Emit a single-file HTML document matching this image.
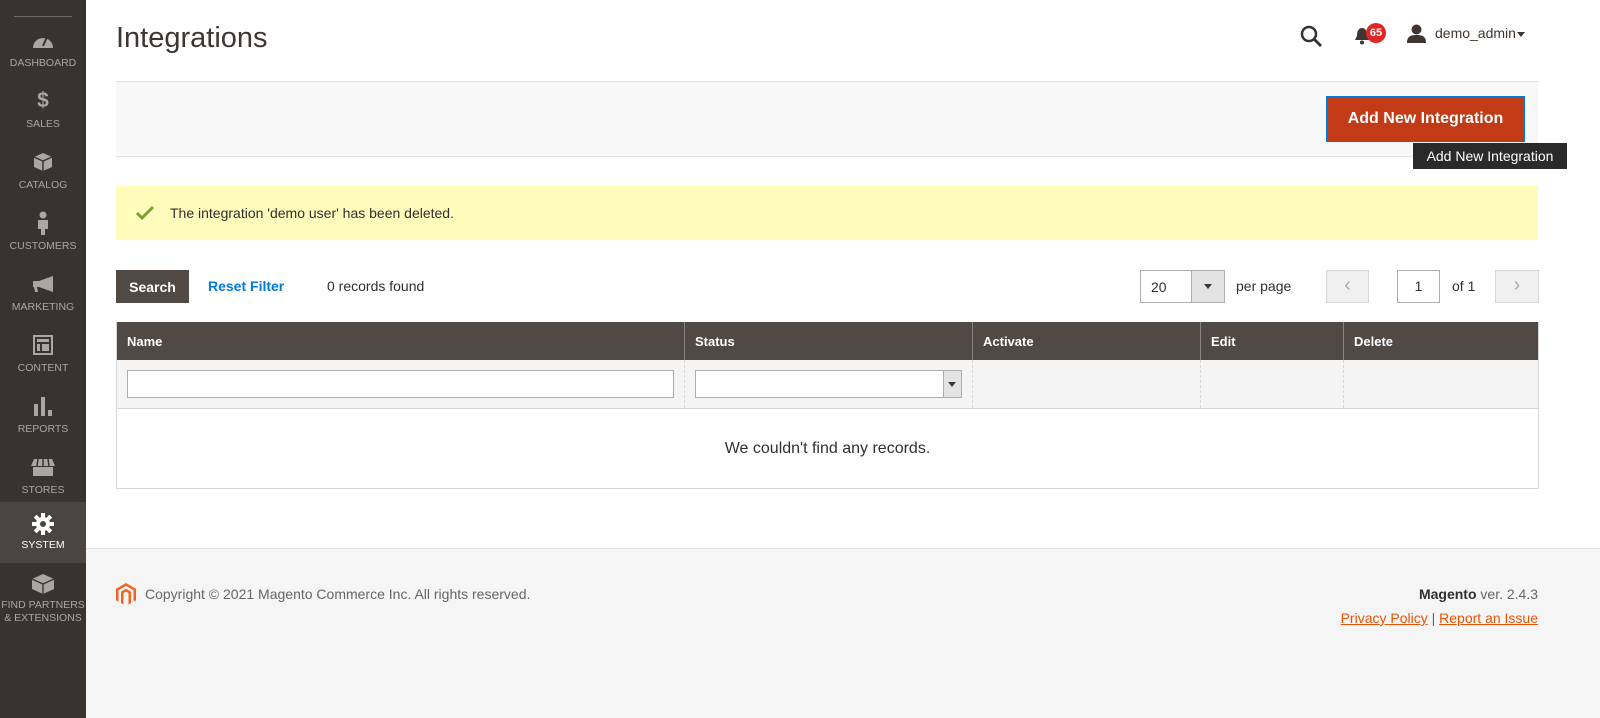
<!DOCTYPE html><html><head><meta charset="utf-8"><style>
*{box-sizing:border-box;margin:0;padding:0}
body{width:1600px;height:718px;overflow:hidden;font-family:"Liberation Sans",sans-serif;color:#303030;background:#fff;position:relative;font-size:14px}
.side{position:absolute;left:0;top:0;width:86px;height:718px;background:#373330}
.side .ln{position:absolute;left:14px;top:16px;width:58px;height:1px;background:#736963}
.it{position:absolute;left:0;width:86px;height:61px;color:#aaa6a0;font-size:10.5px}
.it .ic{position:absolute;left:0;width:86px;top:5px;height:24px;display:flex;justify-content:center;align-items:center}
.it .lb{position:absolute;left:0;width:86px;top:34px;text-align:center;line-height:12px}
.it.act{background:#4a4542;color:#fff}
.abs{position:absolute}
.ttl{left:116px;top:22px;font-size:29px;color:#41362f}
.bar{left:116px;top:81px;width:1422px;height:76px;background:#f8f8f8;border-top:1px solid #e3e3e3;border-bottom:1px solid #e3e3e3}
.btn{left:1326px;top:96px;width:199px;height:46px;background:#c33a16;border:1px solid #007bdb;color:#fff;font-size:16px;font-weight:bold;display:flex;align-items:center;justify-content:center}
.tip{left:1413px;top:143px;width:154px;height:26px;background:#2a2a2a;color:#fff;font-size:14px;display:flex;align-items:center;justify-content:center}
.msg{left:116px;top:186px;width:1422px;height:54px;background:#fffbbb;display:flex;align-items:center;padding-left:54px;font-size:14px}
.tb{left:116px;top:322px;width:1423px;border:1px solid #d6d6d6;border-top:none}
.hd{display:flex;height:38px;background:#514943;color:#fff;font-weight:bold;font-size:13px}
.hd div{padding:12px 10px;border-left:1px solid #8a837f}
.hd div:first-child{border-left:none}
.fr{display:flex;height:48px;background:#f4f4f4}
.fr>div{border-left:1px dashed #d6d6d6;padding:10px 10px}
.fr>div:first-child{border-left:none}
.em{height:80px;display:flex;align-items:center;justify-content:center;font-size:16px;border-top:1px solid #d6d6d6}
.foot{left:86px;top:548px;width:1514px;height:170px;background:#f5f5f5;border-top:1px solid #e3e3e3}
.tri{position:absolute;width:0;height:0;border-left:4px solid transparent;border-right:4px solid transparent;border-top:5px solid #41362f}
</style></head><body>
<div class="side"><div class="ln"></div>
<div class="it" style="top:23px"><div class="ic"><svg width="24" height="16" viewBox="0 0 24 16"><path d="M2 16A10 10 0 0 1 22 16Z" fill="#aaa6a0"/><path d="M12 14L16 5" stroke="#373330" stroke-width="2"/></svg></div><div class="lb">DASHBOARD</div></div>
<div class="it" style="top:84px"><div class="ic" style="font-size:21px;font-weight:bold">$</div><div class="lb">SALES</div></div>
<div class="it" style="top:145px"><div class="ic"><svg width="20" height="20"><path d="M10 1L19 5V15L10 19L1 15V5Z" fill="#aaa6a0"/><path d="M1 5L10 9L19 5M10 9V19" stroke="#373330" stroke-width="1.5" fill="none"/></svg></div><div class="lb">CATALOG</div></div>
<div class="it" style="top:206px"><div class="ic"><svg width="12" height="24"><circle cx="6" cy="4" r="3.5" fill="#aaa6a0"/><path d="M1 9H11V18H8V24H4V18H1Z" fill="#aaa6a0"/></svg></div><div class="lb">CUSTOMERS</div></div>
<div class="it" style="top:267px"><div class="ic"><svg width="22" height="18"><path d="M1 6H7L21 1V17L7 12H5L6 17H3L2 12H1Z" fill="#aaa6a0"/></svg></div><div class="lb">MARKETING</div></div>
<div class="it" style="top:328px"><div class="ic"><svg width="20" height="20"><rect x="1" y="1" width="18" height="18" fill="none" stroke="#aaa6a0" stroke-width="2"/><rect x="4" y="4" width="12" height="3" fill="#aaa6a0"/><rect x="4" y="9" width="3" height="7" fill="#aaa6a0"/><rect x="9" y="9" width="7" height="7" fill="#aaa6a0"/></svg></div><div class="lb">CONTENT</div></div>
<div class="it" style="top:389px"><div class="ic"><svg width="20" height="20"><rect x="1" y="8" width="4" height="12" fill="#aaa6a0"/><rect x="8" y="1" width="4" height="19" fill="#aaa6a0"/><rect x="15" y="14" width="4" height="6" fill="#aaa6a0"/></svg></div><div class="lb">REPORTS</div></div>
<div class="it" style="top:450px"><div class="ic"><svg width="24" height="18"><path d="M3 1H21L24 8H0Z" fill="#aaa6a0"/><path d="M2 9H22V18H2Z" fill="#aaa6a0"/><path d="M7 1L6 8M12 1V8M17 1L18 8" stroke="#373330" stroke-width="1.5"/></svg></div><div class="lb">STORES</div></div>
<div class="it act" style="top:502px"><div class="ic" style="top:10px"><svg width="22" height="22" viewBox="0 0 22 22"><g fill="#fff"><circle cx="11" cy="11" r="7"/><rect x="9" y="0" width="4" height="22"/><rect x="0" y="9" width="22" height="4"/><rect x="9" y="0" width="4" height="22" transform="rotate(45 11 11)"/><rect x="9" y="0" width="4" height="22" transform="rotate(-45 11 11)"/></g><circle cx="11" cy="11" r="3" fill="#4a4542"/></svg></div><div class="lb" style="top:37px">SYSTEM</div></div>
<div class="it" style="top:572px"><div class="ic" style="top:0"><svg width="24" height="22"><path d="M12 1L23 6V16L12 21L1 16V6Z" fill="#aaa6a0"/><path d="M1 6L12 11L23 6M12 11V21" stroke="#373330" stroke-width="1.3" fill="none"/></svg></div><div class="lb" style="top:27px;line-height:13px">FIND PARTNERS<br>&amp; EXTENSIONS</div></div>
</div>
<div class="abs ttl">Integrations</div>
<svg class="abs" style="left:1300px;top:25px" width="22" height="22"><circle cx="9" cy="9" r="7" fill="none" stroke="#333" stroke-width="2.5"/><path d="M14 14L21 21" stroke="#333" stroke-width="2.8"/></svg>
<svg class="abs" style="left:1354px;top:27px" width="16" height="18"><path d="M8 1C4 1 3 5 3 9L1 13H15L13 9C13 5 12 1 8 1Z" fill="#41362f"/><circle cx="8" cy="15.5" r="2" fill="#41362f"/></svg>
<div class="abs" style="left:1366px;top:23px;width:20px;height:20px;border-radius:50%;background:#e22626;color:#fff;font-size:11px;font-weight:bold;display:flex;align-items:center;justify-content:center">65</div>
<svg class="abs" style="left:1407px;top:24px" width="19" height="19"><circle cx="9.5" cy="5.5" r="5" fill="#41362f"/><path d="M0 19C0 12 4 11 9.5 11S19 12 19 19Z" fill="#41362f"/></svg>
<div class="abs" style="left:1435px;top:25px;font-size:14px;color:#41362f">demo_admin</div>
<div class="tri" style="left:1517px;top:32px"></div>
<div class="abs bar"></div>
<div class="abs btn">Add New Integration</div>
<div class="abs tip">Add New Integration</div>
<div class="abs msg">The integration 'demo user' has been deleted.</div>
<svg class="abs" style="left:135px;top:205px" width="20" height="16"><path d="M2 8L7 13L18 2" stroke="#79a22e" stroke-width="3" fill="none"/></svg>
<div class="abs" style="left:116px;top:270px;width:73px;height:33px;background:#514943;color:#fff;font-weight:bold;display:flex;align-items:center;justify-content:center">Search</div>
<div class="abs" style="left:208px;top:278px;color:#007bdb;font-weight:bold">Reset Filter</div>
<div class="abs" style="left:327px;top:278px">0 records found</div>
<div class="abs" style="left:1140px;top:270px;width:85px;height:33px;border:1px solid #adadad;padding:8px 10px">20</div>
<div class="abs" style="left:1191px;top:271px;width:33px;height:31px;background:#e3e3e3;border-left:1px solid #adadad"><div class="tri" style="left:12px;top:13px"></div></div>
<div class="abs" style="left:1236px;top:278px">per page</div>
<div class="abs" style="left:1326px;top:270px;width:43px;height:33px;background:#f0f0f0;border:1px solid #d6d6d6;color:#aaa;text-align:center;font-size:20px;line-height:28px">&#8249;</div>
<div class="abs" style="left:1397px;top:270px;width:43px;height:33px;border:1px solid #adadad;text-align:center;line-height:31px">1</div>
<div class="abs" style="left:1452px;top:278px">of 1</div>
<div class="abs" style="left:1495px;top:270px;width:44px;height:33px;background:#f0f0f0;border:1px solid #d6d6d6;color:#aaa;text-align:center;font-size:20px;line-height:28px">&#8250;</div>
<div class="abs tb">
<div class="hd"><div style="width:567px">Name</div><div style="width:288px">Status</div><div style="width:228px">Activate</div><div style="width:143px">Edit</div><div style="flex:1">Delete</div></div>
<div class="fr"><div style="width:567px"><div style="height:28px;background:#fff;border:1px solid #adadad"></div></div><div style="width:288px"><div style="height:28px;background:#fff;border:1px solid #adadad;position:relative"><div style="position:absolute;right:0;top:0;width:18px;height:26px;background:#e3e3e3;border-left:1px solid #adadad"><div class="tri" style="left:4px;top:11px"></div></div></div></div><div style="width:228px"></div><div style="width:143px"></div><div style="flex:1"></div></div>
<div class="em">We couldn't find any records.</div>
</div>
<div class="abs foot"></div>
<svg class="abs" style="left:116px;top:583px" width="20" height="23" viewBox="0 0 20 23"><path d="M10 0L20 5.8V17.2L17.5 18.6V7.2L10 2.9L2.5 7.2V18.6L0 17.2V5.8Z M5 8.6L10 5.7L15 8.6V20.1L12.5 21.5V10L10 8.6L7.5 10V21.5L5 20.1Z" fill="#f26322"/></svg>
<div class="abs" style="left:145px;top:586px;color:#666">Copyright © 2021 Magento Commerce Inc. All rights reserved.</div>
<div class="abs" style="right:62px;top:586px;color:#666"><b style="color:#303030">Magento</b> ver. 2.4.3</div>
<div class="abs" style="right:62px;top:610px;color:#666"><span style="color:#eb5202;text-decoration:underline">Privacy Policy</span> | <span style="color:#eb5202;text-decoration:underline">Report an Issue</span></div>
</body></html>
